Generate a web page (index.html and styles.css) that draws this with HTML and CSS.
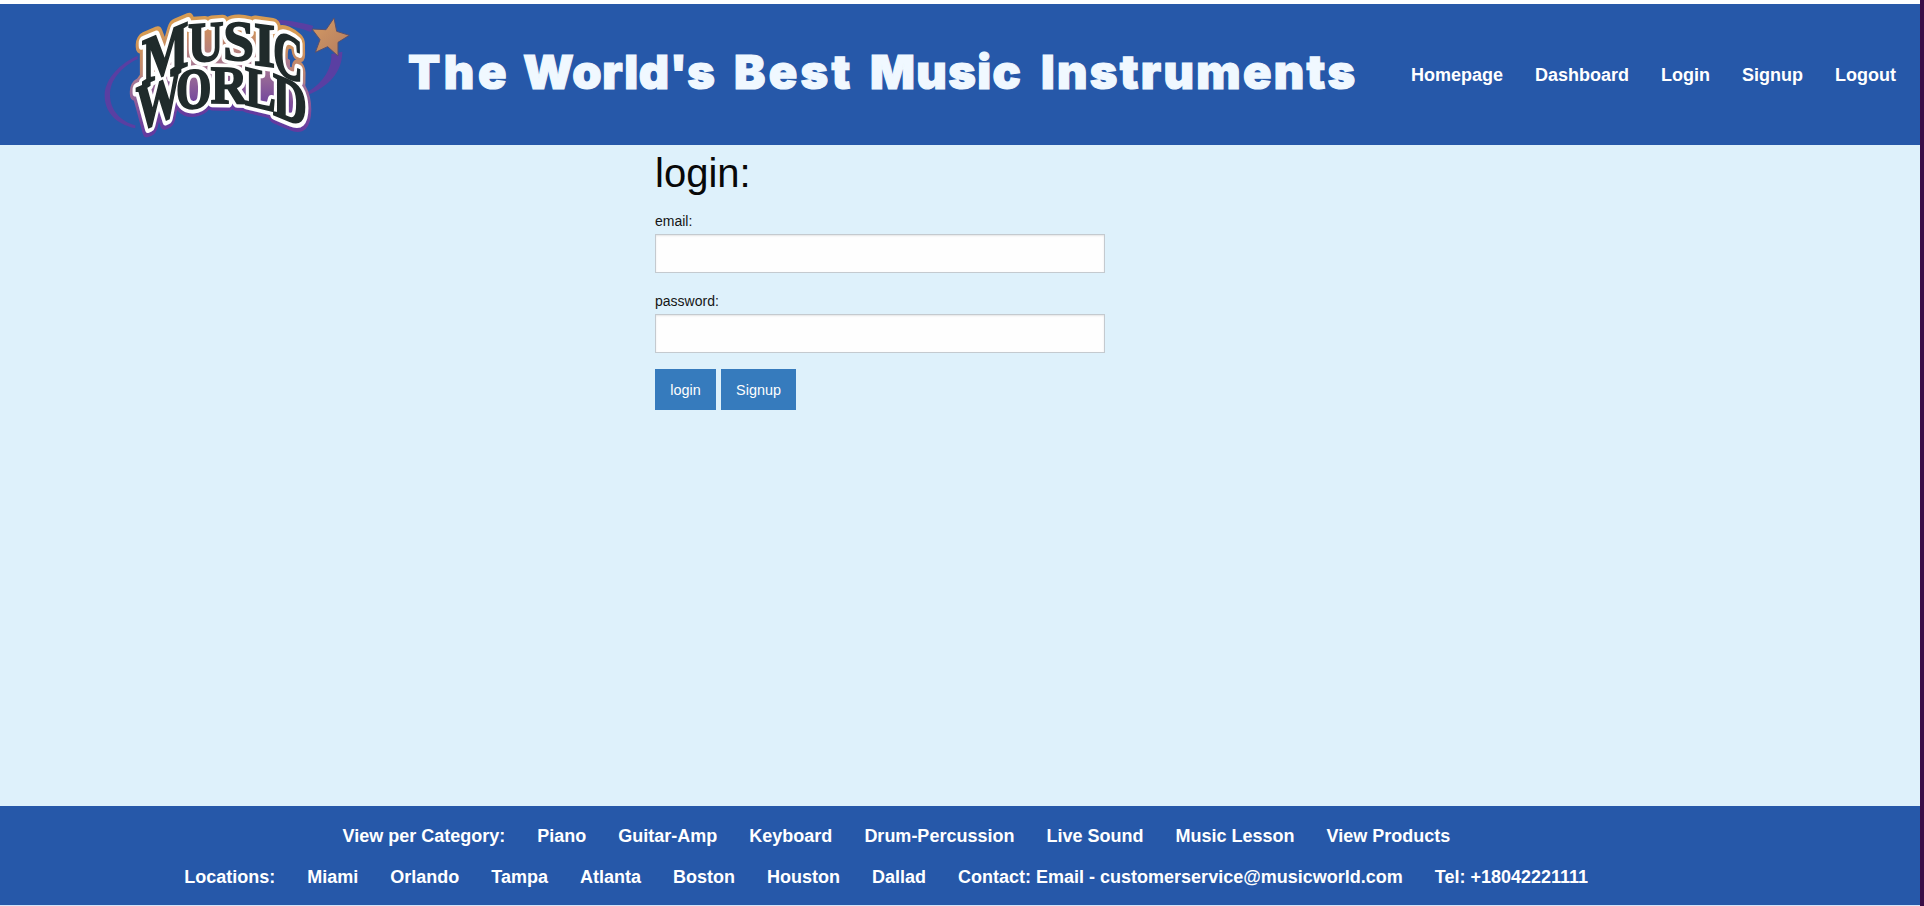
FILE: index.html
```html
<!DOCTYPE html>
<html lang="en">
<head>
<meta charset="utf-8">
<title>Music World</title>
<link rel="stylesheet" href="styles.css">
</head>
<body>
<div class="page">
  <header class="header">
    <svg class="logo" viewBox="0 12 840 423" role="img" aria-label="Music World">
      <defs>
        <linearGradient id="glow-top" gradientUnits="userSpaceOnUse" x1="0" y1="-140" x2="0" y2="30">
          <stop offset="0" stop-color="#d79b52"/>
          <stop offset=".5" stop-color="#c48a6a"/>
          <stop offset="1" stop-color="#a77894"/>
        </linearGradient>
        <linearGradient id="glow-bottom" gradientUnits="userSpaceOnUse" x1="0" y1="-140" x2="0" y2="20">
          <stop offset="0" stop-color="#a77894"/>
          <stop offset=".6" stop-color="#7c4a9c"/>
          <stop offset="1" stop-color="#633b9f"/>
        </linearGradient>
        <linearGradient id="fill" gradientUnits="userSpaceOnUse" x1="0" y1="80" x2="0" y2="320">
          <stop offset="0" stop-color="#d08f5a"/>
          <stop offset=".5" stop-color="#a77894"/>
          <stop offset="1" stop-color="#6d419e"/>
        </linearGradient>
        <linearGradient id="star" x1="0" y1="0" x2="1" y2="1">
          <stop offset="0" stop-color="#d59a63"/>
          <stop offset="1" stop-color="#b27c60"/>
        </linearGradient>
        <g id="music" class="letters">
          <text transform="matrix(.82 -.35 0 1.09 156 254)">M</text>
          <text transform="matrix(.82 -.06 0 .94 294 187)">U</text>
          <text transform="matrix(.92 .02 0 .94 400 179)">S</text>
          <text transform="matrix(.9 .12 0 1.02 492 193)">I</text>
          <text transform="matrix(.68 .3 0 1.06 550 213)">C</text>
        </g>
        <g id="world" class="letters">
          <text transform="matrix(.76 -.33 0 1.1 137 396)">W</text>
          <text transform="matrix(.76 -.05 0 .96 258 328)">O</text>
          <text transform="matrix(.85 .02 0 .89 362 308)">R</text>
          <text transform="matrix(.77 .19 0 .94 465 313)">L</text>
          <text transform="matrix(.78 .32 0 1.03 549 343)">D</text>
        </g>
      </defs>
      <path class="orbit" d="M143 167C90 190 47 235 44 282c-2 52 32 90 92 103v-9c-44-12-76-46-76-92 0-42 32-82 83-107z"/>
      <path class="orbit" d="M500 60c60-5 120 3 170 18l-8 18c-50-18-100-28-162-30z"/>
      <path class="orbit" d="M757 155c0 60-40 105-105 130v-8c50-30 75-75 72-115z"/>
      <use href="#music" class="glow-top"/>
      <use href="#world" class="glow-bottom"/>
      <path class="glow-fill" d="M190 190L330 90 450 90 600 180 600 320 430 290 250 300z"/>
      <use href="#music" class="rim"/>
      <use href="#world" class="rim"/>
      <use href="#music" class="ink"/>
      <use href="#world" class="ink"/>
      <path class="star" d="M732 54l8 40 38 12-34 21 0 41-31-28-37 17 14-38-24-32 42 2z"/>
    </svg>
    <h1 class="title"><span class="w1">The</span><span class="w2">World's</span><span class="w3">Best</span><span class="w4">Music</span><span class="w5">Instruments</span></h1>
    <nav class="nav">
      <a>Homepage</a><a>Dashboard</a><a>Login</a><a>Signup</a><a>Logout</a>
    </nav>
  </header>
  <main class="main">
    <form class="form">
      <h2>login:</h2>
      <label for="email">email:</label>
      <input id="email" type="text">
      <label for="password">password:</label>
      <input id="password" type="password">
      <div class="actions">
        <button type="button">login</button>
        <button type="button">Signup</button>
      </div>
    </form>
  </main>
  <footer class="footer">
    <div class="row categories">
      <span>View per Category:</span><a>Piano</a><a>Guitar-Amp</a><a>Keyboard</a><a>Drum-Percussion</a><a>Live Sound</a><a>Music Lesson</a><a>View Products</a>
    </div>
    <div class="row locations">
      <span>Locations:</span><a>Miami</a><a>Orlando</a><a>Tampa</a><a>Atlanta</a><a>Boston</a><a>Houston</a><a>Dallad</a><span>Contact: Email - customerservice@musicworld.com</span><span>Tel: +18042221111</span>
    </div>
  </footer>
</div>
</body>
</html>
```
FILE: styles.css
```css
* { box-sizing: border-box; }
html { background: #e3eefb; }
body {
  margin: 0;
  height: 906px;
  overflow: hidden;
  background: #3a0d45;
  font-family: "Liberation Sans", Arial, sans-serif;
}
.page {
  display: flex;
  flex-direction: column;
  width: 1920px;
  height: 906px;
  border-top: 4px solid #fdfeff;
  border-bottom: 1px solid #d5e4f8;
  background: #def1fb;
}
.header {
  display: flex;
  height: 141px;
  padding-left: 90px;
  background: #2658a9;
}
.logo { flex: none; width: 280px; height: 141px; }
.letters { font-family: "Liberation Serif", serif; font-weight: 700; font-size: 180px; }
.glow-top { fill: url(#glow-top); stroke: url(#glow-top); stroke-width: 52px; stroke-linejoin: round; }
.glow-bottom { fill: url(#glow-bottom); stroke: url(#glow-bottom); stroke-width: 52px; stroke-linejoin: round; }
.glow-fill { fill: url(#fill); }
.rim { fill: #fff; stroke: #fff; stroke-width: 30px; stroke-linejoin: round; }
.ink { fill: #202b2b; stroke: #202b2b; stroke-width: 6px; }
.orbit { fill: #5a3fa2; }
.star { fill: url(#star); stroke: #57506f; stroke-width: 3px; stroke-linejoin: round; }
.title {
  flex: none;
  display: flex;
  width: 1024px;
  margin: 0;
  padding: 38px 0 0 38px;
  color: #f0f8ff;
  font: 900 47px/60px Inter, "Arial Black", sans-serif;
  -webkit-text-stroke: 1.2px #f0f8ff;
  white-space: nowrap;
}
.w1 { width: 115px; letter-spacing: 3.6px; }
.w2 { width: 211px; letter-spacing: .7px; }
.w3 { width: 136px; letter-spacing: 3.3px; }
.w4 { width: 171px; letter-spacing: 1.4px; }
.w5 { letter-spacing: 2.3px; }
.nav {
  display: flex;
  gap: 32px;
  padding-top: 60px;
  margin-left: 17px;
  color: #fff;
  font-weight: 700;
  font-size: 18px;
  line-height: 22px;
}
.main { height: 661px; }
.form { width: 450px; margin-left: 655px; }
.form h2 {
  margin: 0 0 13px;
  color: #080808;
  font-weight: 400;
  font-size: 40px;
  line-height: 56px;
}
.form label {
  display: block;
  height: 20px;
  color: #151515;
  font-size: 14px;
  line-height: 15px;
}
.form input {
  display: block;
  width: 450px;
  height: 39px;
  margin: 0 0 21px;
  padding: 8px;
  border: 1px solid #c4cacf;
  border-radius: 0;
  background: #fefefe;
  box-shadow: inset 0 1px 2px rgba(10, 10, 10, .1);
}
.actions { display: flex; gap: 5px; margin-top: -5px; }
.actions button {
  height: 41px;
  width: 61px;
  padding: 0;
  border: 0;
  background: #367bbd;
  color: #fefefe;
  font: 14.4px/16px "Liberation Sans", Arial, sans-serif;
}
.actions button + button { width: 75px; }
.footer {
  height: 99px;
  padding-top: 19px;
  background: #2658a9;
  color: #fff;
  font-weight: 700;
  font-size: 18px;
}
.row { display: flex; gap: 32px; height: 41px; line-height: 22px; white-space: nowrap; }
.categories { padding-left: 342.6px; }
.locations { padding-left: 184.3px; }
```
